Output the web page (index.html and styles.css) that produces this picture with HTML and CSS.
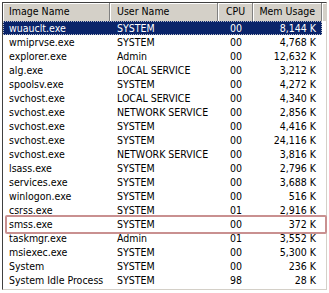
FILE: index.html
```html
<!DOCTYPE html>
<html>
<head>
  <link rel="stylesheet" href="styles.css">
</head>
<body>
  <div class="listview">
    <div class="header">
      <div class="col name">Image Name</div>
      <div class="col user">User Name</div>
      <div class="col cpu">CPU</div>
      <div class="col mem">Mem Usage</div>
      <div class="col filler"></div>
    </div>
    <div class="rows" id="rows"></div>
  </div>
  <div class="mark"></div>

  <script>
    // Process list as shown in Task Manager
    const procs = [
      ['wuauclt.exe', 'SYSTEM', '00', '8,144 K'],
      ['wmiprvse.exe', 'SYSTEM', '00', '4,768 K'],
      ['explorer.exe', 'Admin', '00', '12,632 K'],
      ['alg.exe', 'LOCAL SERVICE', '00', '3,212 K'],
      ['spoolsv.exe', 'SYSTEM', '00', '4,272 K'],
      ['svchost.exe', 'LOCAL SERVICE', '00', '4,340 K'],
      ['svchost.exe', 'NETWORK SERVICE', '00', '2,856 K'],
      ['svchost.exe', 'SYSTEM', '00', '4,416 K'],
      ['svchost.exe', 'SYSTEM', '00', '24,116 K'],
      ['svchost.exe', 'NETWORK SERVICE', '00', '3,816 K'],
      ['lsass.exe', 'SYSTEM', '00', '2,796 K'],
      ['services.exe', 'SYSTEM', '00', '3,688 K'],
      ['winlogon.exe', 'SYSTEM', '00', '516 K'],
      ['csrss.exe', 'SYSTEM', '01', '2,916 K'],
      ['smss.exe', 'SYSTEM', '00', '372 K'],
      ['taskmgr.exe', 'Admin', '01', '3,552 K'],
      ['msiexec.exe', 'SYSTEM', '00', '5,300 K'],
      ['System', 'SYSTEM', '00', '236 K'],
      ['System Idle Process', 'SYSTEM', '98', '28 K']
    ];

    const rows = document.getElementById('rows');
    procs.forEach((p, i) => {
      const row = document.createElement('div');
      row.classList.add('row');
      if (i === 0) row.classList.add('selected');
      ['name', 'user', 'cpu', 'mem'].forEach((cls, j) => {
        const cell = document.createElement('div');
        cell.classList.add('cell', cls);
        cell.textContent = p[j];
        row.appendChild(cell);
      });
      rows.appendChild(row);
    });
  </script>
</body>
</html>
```

FILE: styles.css
```css
* {
  box-sizing: border-box;
  margin: 0;
  padding: 0;
}
body {
  background: white;
  font-family: "DejaVu Sans Condensed", "DejaVu Sans", sans-serif;
  font-stretch: condensed;
  font-size: 10.5px;
  color: black;
  position: relative;
  width: 329px;
  height: 293px;
  overflow: hidden;
}
.listview {
  margin: 2px 0 0 2px;
  width: 325px;
  height: 288px;
  border: 1px solid;
  border-color: #404040 #d4d0c8 #d4d0c8 #404040;
  background: white;
  overflow: hidden;
}
.header {
  display: flex;
  height: 18px;
  background: #d4d0c8;
}
.header .col {
  height: 18px;
  line-height: 17px;
  border-right: 1px solid #808080;
  box-shadow: inset 1px 1px 0 white;
  white-space: nowrap;
  overflow: hidden;
}
.header .name { width: 107px; padding-left: 6px; }
.header .user { width: 108px; padding-left: 7px; }
.header .cpu  { width: 35px; padding-left: 8px; }
.header .mem  { width: 69px; text-align: right; padding-right: 6px; }
.header .filler { flex: 1; border-right: none; }

.row {
  display: flex;
  width: 319px;
  height: 14px;
  line-height: 14px;
  white-space: nowrap;
}
.row.selected {
  background: #0a246a;
  color: white;
  outline: 1px dotted #b8bcc8;
  outline-offset: -1px;
}
.cell { overflow: hidden; }
.cell.name { width: 107px; padding-left: 6px; }
.cell.user { width: 108px; padding-left: 7px; }
.cell.cpu  { width: 35px; text-align: right; padding-right: 11px; }
.cell.mem  { width: 69px; text-align: right; padding-right: 6px; }

/* red annotation box around smss.exe */
.mark {
  position: absolute;
  left: 5px;
  top: 215px;
  width: 322px;
  height: 19px;
  border: 2px solid #c99090;
  border-radius: 2px;
}
```
